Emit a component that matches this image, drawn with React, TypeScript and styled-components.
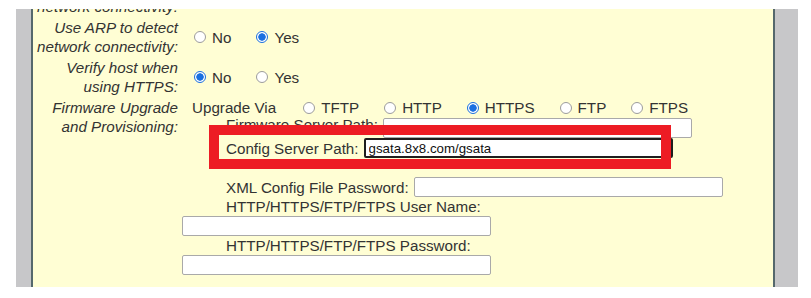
import React from 'react';
import styled, { createGlobalStyle } from 'styled-components';

const GlobalStyle = createGlobalStyle`
  body {
    margin: 0;
    background: #ffffff;
    font-family: "Liberation Sans", Arial, sans-serif;
  }
`;

const Frame = styled.div`
  display: flex;
  width: 782px;
  height: 278px;
  margin: 9px 0 0 16px;
  background: #c7c7c9;
`;

const Panel = styled.div`
  position: relative;
  box-sizing: border-box;
  width: 744px;
  margin-left: 15px;
  overflow: hidden;
  background: #fffed4;
  border-left: 2px solid #55686c;
  border-right: 2px solid #55686c;
  color: #333333;
  font-size: 15.2px;
`;

const Rows = styled.div`
  margin-top: -32px;
`;

interface RowProps {
  $top?: boolean;
}
const Row = styled.div<RowProps>`
  display: grid;
  grid-template-columns: 149px 1fr;
  min-height: 40px;
  align-items: ${(props: RowProps) => (props.$top ? 'start' : 'center')};
`;

const FieldLabel = styled.div`
  padding: 1px 4px 1px 0;
  text-align: right;
  font-style: italic;
  line-height: 19px;
  white-space: nowrap;
`;

interface IndentProps {
  $indent?: number;
}
const Choices = styled.div<IndentProps>`
  display: flex;
  align-items: center;
  gap: 25px;
  height: 19px;
  padding-left: ${(props: IndentProps) => props.$indent ?? 0}px;
  line-height: 19px;
  white-space: nowrap;
`;

const ViaLabel = styled.span`
  margin-right: 2px;
`;

const Option = styled.label`
  display: inline-flex;
  align-items: center;
  gap: 6px;
`;

const Radio = styled.input.attrs({ type: 'radio' })`
  appearance: none;
  box-sizing: border-box;
  width: 12px;
  height: 12px;
  margin: 0;
  border: 1px solid #9c9c9c;
  border-radius: 50%;
  background: #ffffff;

  &:checked {
    border: 1.5px solid #1a6fe0;
    background: radial-gradient(circle, #1a6fe0 0 3.4px, #ffffff 4px);
  }
`;

const Stack = styled.div`
  display: flex;
  flex-direction: column;
  padding-top: 1px;
`;

interface LineProps {
  $h: number;
  $indent?: number;
}
const Line = styled.div<LineProps>`
  display: flex;
  align-items: center;
  gap: 5px;
  height: ${(props: LineProps) => props.$h}px;
  padding-left: ${(props: LineProps) => props.$indent ?? 0}px;
  white-space: nowrap;
`;

interface CaptionProps {
  $raise?: number;
}
const Caption = styled.span<CaptionProps>`
  margin-bottom: ${(props: CaptionProps) => (props.$raise ?? 0) * 2}px;
`;

interface BoxProps {
  $focused?: boolean;
}
const TextBox = styled.input.attrs({ type: 'text' })<BoxProps>`
  box-sizing: border-box;
  width: 309px;
  height: 20px;
  margin: 0;
  padding: 0 3px;
  border: ${(props: BoxProps) => (props.$focused ? '2px solid #1e1e1e' : '1px solid #a9a9a9')};
  border-radius: 2px;
  background: #ffffff;
  color: #111111;
  font-family: "Liberation Sans", Arial, sans-serif;
  font-size: 13.3px;
  outline: none;
`;

const Annotation = styled.div`
  position: absolute;
  left: 176px;
  top: 116px;
  box-sizing: border-box;
  width: 462px;
  height: 44px;
  border: 10px solid #ed1c24;
  pointer-events: none;
`;

const protocols = ['TFTP', 'HTTP', 'HTTPS', 'FTP', 'FTPS'];

function YesNo({ name, yes }: { name: string; yes: boolean }) {
  return (
    <Choices $indent={12}>
      <Option>
        <Radio name={name} defaultChecked={!yes} />
        No
      </Option>
      <Option>
        <Radio name={name} defaultChecked={yes} />
        Yes
      </Option>
    </Choices>
  );
}

export default function App() {
  return (
    <>
      <GlobalStyle />
      <Frame>
        <Panel>
          <Rows>
            <Row>
              <FieldLabel>
                Use ICMP to detect
                <br />
                network connectivity:
              </FieldLabel>
              <YesNo name="icmp" yes={false} />
            </Row>
            <Row>
              <FieldLabel>
                Use ARP to detect
                <br />
                network connectivity:
              </FieldLabel>
              <YesNo name="arp" yes={true} />
            </Row>
            <Row>
              <FieldLabel>
                Verify host when
                <br />
                using HTTPS:
              </FieldLabel>
              <YesNo name="verify" yes={false} />
            </Row>
            <Row $top>
              <FieldLabel>
                Firmware Upgrade
                <br />
                and Provisioning:
              </FieldLabel>
              <Stack>
                <Choices $indent={10}>
                  <ViaLabel>Upgrade Via</ViaLabel>
                  {protocols.map((p) => (
                    <Option key={p}>
                      <Radio name="via" defaultChecked={p === 'HTTPS'} />
                      {p}
                    </Option>
                  ))}
                </Choices>
                <Line $h={21} $indent={44}>
                  <Caption $raise={3}>Firmware Server Path:</Caption>
                  <TextBox />
                </Line>
                <Line $h={20} $indent={44}>
                  <Caption>Config Server Path:</Caption>
                  <TextBox $focused defaultValue="gsata.8x8.com/gsata" />
                </Line>
                <Line $h={19} />
                <Line $h={20} $indent={44}>
                  <Caption>XML Config File Password:</Caption>
                  <TextBox />
                </Line>
                <Line $h={19} $indent={44}>
                  <Caption>HTTP/HTTPS/FTP/FTPS User Name:</Caption>
                </Line>
                <Line $h={20}>
                  <TextBox />
                </Line>
                <Line $h={19} $indent={44}>
                  <Caption>HTTP/HTTPS/FTP/FTPS Password:</Caption>
                </Line>
                <Line $h={20}>
                  <TextBox />
                </Line>
              </Stack>
            </Row>
          </Rows>
          <Annotation />
        </Panel>
      </Frame>
    </>
  );
}
